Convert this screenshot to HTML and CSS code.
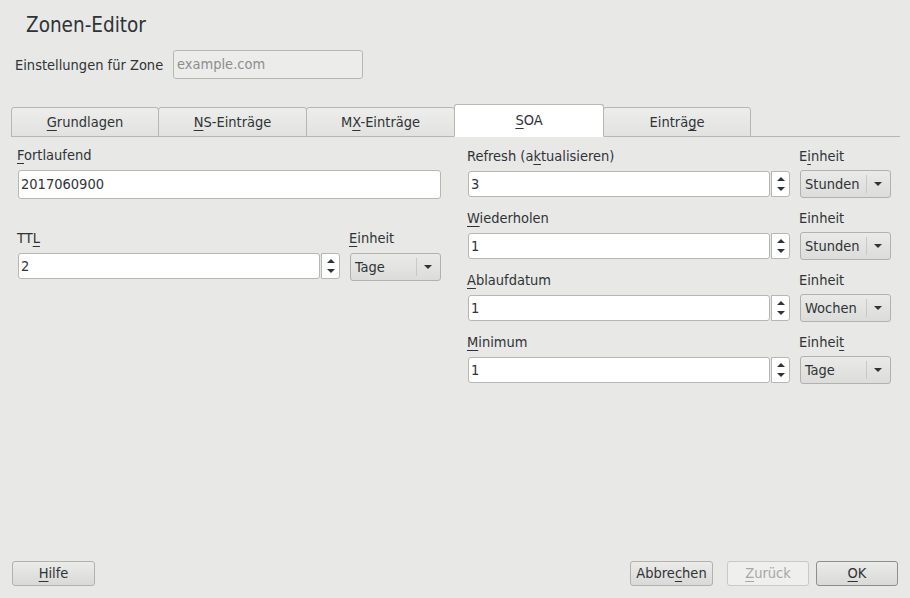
FILE: index.html
```html
<!DOCTYPE html>
<html lang="de">
<head>
<meta charset="utf-8">
<title>Zonen-Editor</title>
<link rel="stylesheet" href="styles.css">
</head>
<body>
<div class="dialog">
  <h1 class="title">Zonen-Editor</h1>
  <div class="zone-row">
    <span class="zone-label">Einstellungen für Zone</span>
    <div class="zone-input">example.com</div>
  </div>

  <div class="tabs">
    <div class="tab"><u>G</u>rundlagen</div>
    <div class="tab"><u>N</u>S-Einträge</div>
    <div class="tab">M<u>X</u>-Einträge</div>
    <div class="tab active"><u>S</u>OA</div>
    <div class="tab">Einträ<u>g</u>e</div>
  </div>

  <div class="content">
    <div class="col left">
      <div class="field">
        <div class="label"><u>F</u>ortlaufend</div>
        <div class="text-input">2017060900</div>
      </div>
      <div class="row ttl">
        <div class="field grow">
          <div class="label">TT<u>L</u></div>
          <div class="spin">
            <div class="spin-input">2</div>
            <div class="spin-btns"><span class="up"></span><span class="down"></span></div>
          </div>
        </div>
        <div class="field unit">
          <div class="label"><u>E</u>inheit</div>
          <div class="combo"><span class="combo-text">Tage</span><span class="combo-sep"></span><span class="combo-arrow"></span></div>
        </div>
      </div>
    </div>

    <div class="col right">
      <div class="row rrow">
        <div class="field grow">
          <div class="label">Refresh (a<u>k</u>tualisieren)</div>
          <div class="spin">
            <div class="spin-input">3</div>
            <div class="spin-btns"><span class="up"></span><span class="down"></span></div>
          </div>
        </div>
        <div class="field unit">
          <div class="label">E<u>i</u>nheit</div>
          <div class="combo"><span class="combo-text">Stunden</span><span class="combo-sep"></span><span class="combo-arrow"></span></div>
        </div>
      </div>
      <div class="row rrow">
        <div class="field grow">
          <div class="label"><u>W</u>iederholen</div>
          <div class="spin">
            <div class="spin-input">1</div>
            <div class="spin-btns"><span class="up"></span><span class="down"></span></div>
          </div>
        </div>
        <div class="field unit">
          <div class="label">Einheit</div>
          <div class="combo"><span class="combo-text">Stunden</span><span class="combo-sep"></span><span class="combo-arrow"></span></div>
        </div>
      </div>
      <div class="row rrow">
        <div class="field grow">
          <div class="label"><u>A</u>blaufdatum</div>
          <div class="spin">
            <div class="spin-input">1</div>
            <div class="spin-btns"><span class="up"></span><span class="down"></span></div>
          </div>
        </div>
        <div class="field unit">
          <div class="label">Einheit</div>
          <div class="combo"><span class="combo-text">Wochen</span><span class="combo-sep"></span><span class="combo-arrow"></span></div>
        </div>
      </div>
      <div class="row rrow">
        <div class="field grow">
          <div class="label"><u>M</u>inimum</div>
          <div class="spin">
            <div class="spin-input">1</div>
            <div class="spin-btns"><span class="up"></span><span class="down"></span></div>
          </div>
        </div>
        <div class="field unit">
          <div class="label">Einhei<u>t</u></div>
          <div class="combo"><span class="combo-text">Tage</span><span class="combo-sep"></span><span class="combo-arrow"></span></div>
        </div>
      </div>
    </div>
  </div>

  <div class="buttons">
    <button class="btn"><u>H</u>ilfe</button>
    <div class="spacer"></div>
    <button class="btn cancel">Abbre<u>c</u>hen</button>
    <button class="btn disabled"><u>Z</u>urück</button>
    <button class="btn default"><u>O</u>K</button>
  </div>
</div>
</body>
</html>
```

FILE: styles.css
```css
* { box-sizing: border-box; }
html, body {
  margin: 0;
  padding: 0;
  background: #e8e8e7;
}
body {
  width: 910px;
  height: 598px;
  overflow: hidden;
  font-family: "DejaVu Sans Condensed", "DejaVu Sans", sans-serif;
  font-size: 14.5px;
  color: #2e3436;
}
u {
  text-decoration: underline;
  text-underline-offset: 3px;
  text-decoration-thickness: 1px;
}
.dialog {
  height: 598px;
  display: flex;
  flex-direction: column;
}
.title {
  margin: 0;
  padding: 12px 0 0 26px;
  font-size: 20.5px;
  font-weight: normal;
  line-height: 26px;
  color: #2e3436;
}
.zone-row {
  display: flex;
  align-items: center;
  margin-top: 12px;
  padding-left: 15px;
}
.zone-label {
  width: 158px;
}
.zone-input {
  width: 190px;
  height: 29px;
  border: 1px solid #b6b6b3;
  border-radius: 3px;
  background: #ececeb;
  color: #8b8e8f;
  padding: 0 0 0 3px;
  line-height: 27px;
}
.tabs {
  display: flex;
  align-items: flex-end;
  margin: 25px 10px 0 11px;
  height: 33px;
  border-bottom: 1px solid #b6b6b3;
}
.tab {
  width: 149px;
  height: 30px;
  margin-bottom: -1px;
  margin-left: -1px;
  border: 1px solid #b6b6b3;
  border-radius: 3px 3px 0 0;
  background: linear-gradient(#ededec, #e2e2e1);
  text-align: center;
  line-height: 28px;
  color: #2e3436;
}
.tab:first-child { margin-left: 0; width: 148px; }
.tab.active {
  position: relative;
  z-index: 1;
  width: 150px;
  height: 33px;
  background: #ffffff;
  border-bottom-color: #ffffff;
  line-height: 31px;
}
.tab.active + .tab { width: 148px; }
.content {
  display: flex;
  padding: 9px 0 0 17px;
  gap: 26px;
}
.col {
  display: flex;
  flex-direction: column;
}
.col.left { width: 424px; }
.col.right { width: 424px; padding-top: 1px; }
.field {
  display: flex;
  flex-direction: column;
}
.label {
  height: 24px;
  line-height: 18px;
}
.text-input {
  margin-left: 1px;
  height: 29px;
  border: 1px solid #b6b6b3;
  border-radius: 3px;
  background: #ffffff;
  padding-left: 2px;
  line-height: 27px;
}
.row {
  display: flex;
  gap: 9px;
}
.row.ttl {
  margin-top: 30px;
}
.grow { flex: 1; }
.unit { width: 92px; }
.rrow { height: 62px; }
.spin {
  display: flex;
  margin-left: 1px;
  height: 26px;
}
.spin-input {
  flex: 1;
  border: 1px solid #b6b6b3;
  border-radius: 3px;
  background: #ffffff;
  padding-left: 2px;
  line-height: 24px;
}
.spin-btns {
  width: 19px;
  margin-left: 1px;
  border: 1px solid #b6b6b3;
  border-radius: 0 3px 3px 0;
  background: #ffffff;
  display: flex;
  flex-direction: column;
  align-items: center;
  justify-content: space-around;
  padding: 2px 0;
}
.up, .down {
  width: 0;
  height: 0;
  border-left: 4px solid transparent;
  border-right: 4px solid transparent;
}
.up { border-bottom: 4px solid #2e3436; }
.down { border-top: 4px solid #2e3436; }
.combo {
  margin-left: 1px;
  margin-top: -1px;
  height: 28px;
  border: 1px solid #b1b1ae;
  border-radius: 3px;
  background: linear-gradient(#eaeae9, #dcdcdb);
  display: flex;
  align-items: center;
}
.left .combo { margin-top: 0; }
.combo-text {
  flex: 1;
  padding-left: 4px;
}
.combo-sep {
  width: 1px;
  height: 18px;
  background: #c9c9c7;
}
.combo-arrow {
  width: 0;
  height: 0;
  margin: 0 8px 0 7px;
  border-left: 4px solid transparent;
  border-right: 4px solid transparent;
  border-top: 4px solid #2e3436;
}
.spacer { flex: 1; }
.buttons {
  margin-top: auto;
  display: flex;
  align-items: center;
  padding: 0 12px 12px 12px;
}
.btn {
  font-family: inherit;
  font-size: 14.5px;
  color: #2e3436;
  width: 83px;
  height: 25px;
  border: 1px solid #b1b1ae;
  border-radius: 3px;
  background: linear-gradient(#ebebea, #d9d9d8);
  padding: 0;
  line-height: 23px;
}
.btn.cancel { margin-right: 14px; }
.btn.disabled {
  width: 82px;
  margin-right: 7px;
  background: #efefee;
  color: #a5a8a8;
  border-color: #c9c9c7;
}
.btn.default {
  width: 82px;
  border-color: #8e8e8c;
}
```
